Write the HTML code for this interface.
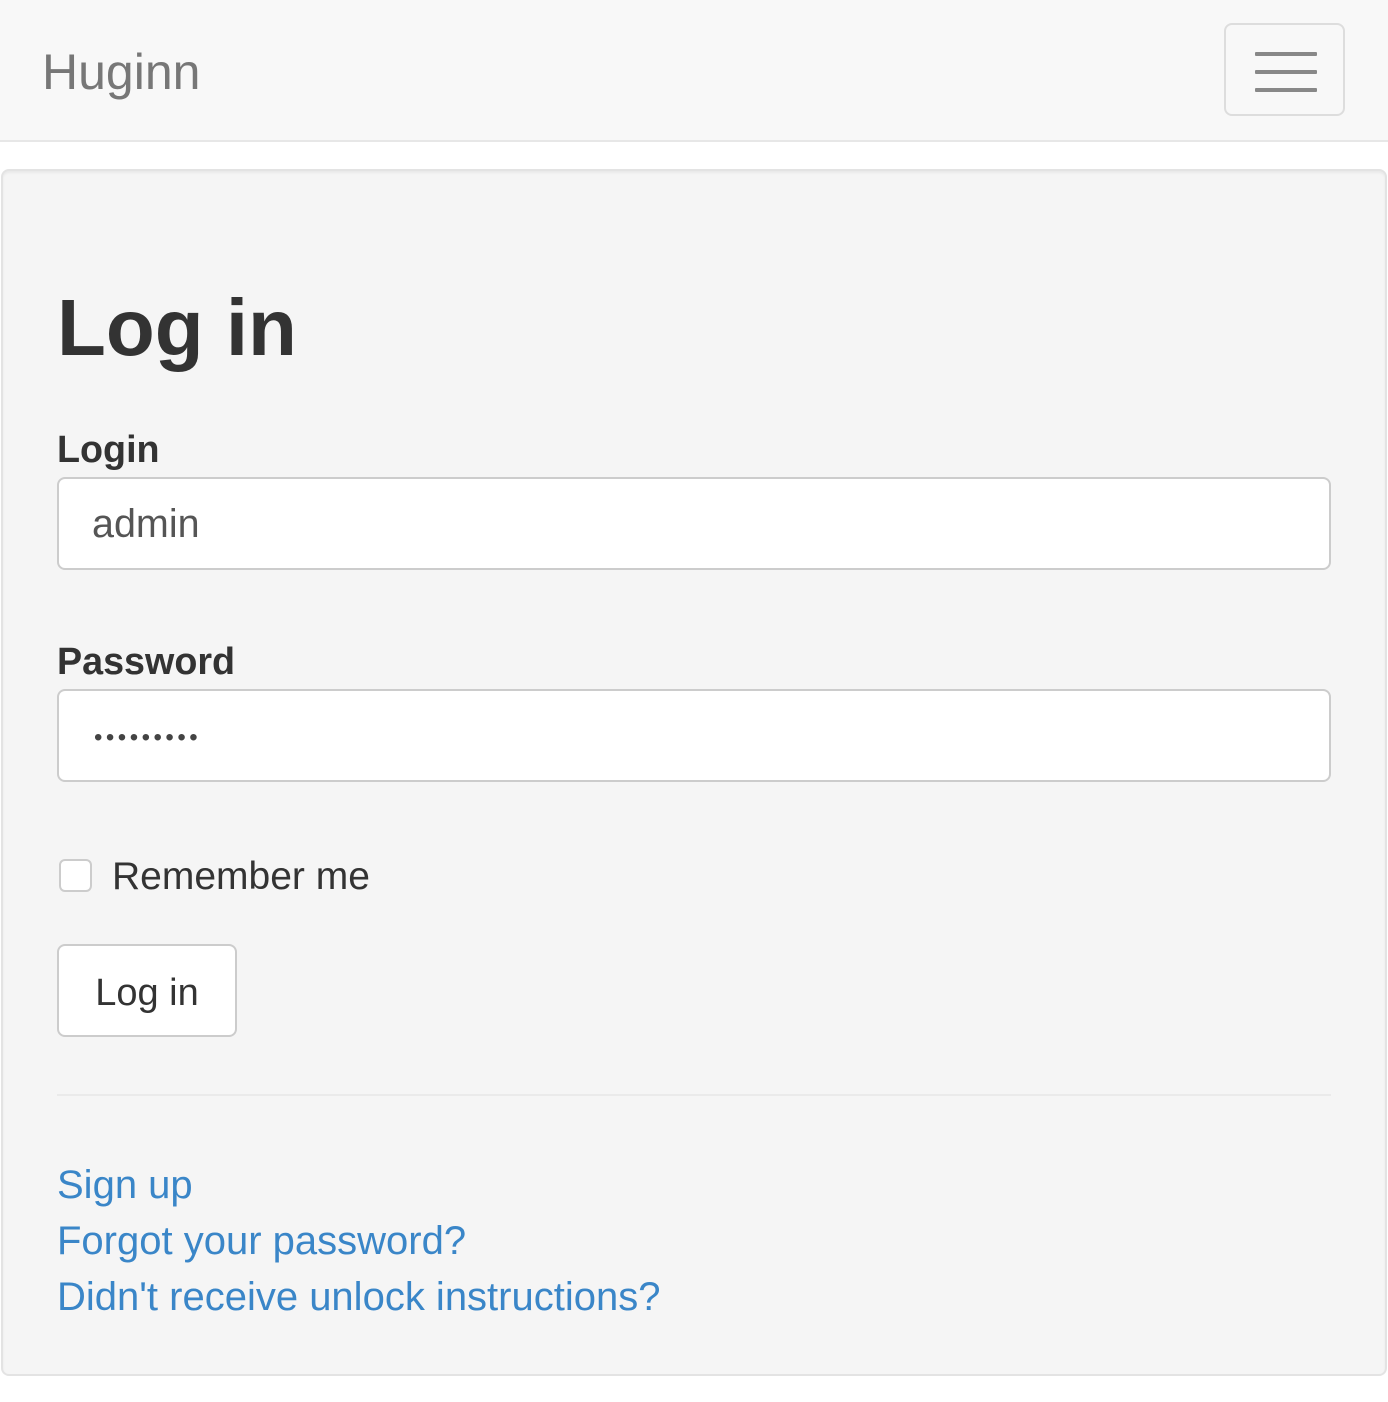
<!DOCTYPE html>
<html><head><meta charset="utf-8"><style>
*{box-sizing:border-box;margin:0;padding:0}
body{width:1388px;height:1402px;background:#fff;font-family:"Liberation Sans",Arial,sans-serif;color:#333;position:relative;overflow:hidden}
.nav{position:absolute;left:0;top:0;width:1388px;height:142px;background:#f8f8f8;border-bottom:2px solid #e7e7e7}
.brand{position:absolute;left:42px;top:44px;font-size:50px;line-height:56px;color:#777}
.tog{position:absolute;left:1224px;top:23px;width:121px;height:93px;border:2px solid #ddd;border-radius:8px}
.tog i{position:absolute;left:29px;width:62px;height:4px;background:#888;border-radius:1px}
.well{position:absolute;left:1px;top:169px;width:1386px;height:1207px;background:#f5f5f5;border:2px solid #e3e3e3;border-radius:8px;box-shadow:inset 0 2px 2px rgba(0,0,0,.05)}
.a{position:absolute;white-space:nowrap}
h1{position:absolute;left:57px;top:282px;font-size:80px;line-height:92px;font-weight:bold;color:#333}
.lbl{font-weight:bold;font-size:37.7px;line-height:40px;color:#333}
.inp{position:absolute;left:57px;width:1274px;height:93px;background:#fff;border:2px solid #ccc;border-radius:8px;font-size:39.5px;line-height:91px;padding-left:33px;color:#555}
.cb{position:absolute;left:59px;top:859px;width:33px;height:33px;border:2px solid #ccc;border-radius:6px;background:#fff}
.btn{position:absolute;left:57px;top:944px;width:180px;height:93px;background:#fff;border:2px solid #ccc;border-radius:8px;font-size:38px;line-height:95px;text-align:center;color:#333}
.hr{position:absolute;left:57px;top:1094px;width:1274px;height:2px;background:#eaeaea}
.lk{color:#3a86c8;font-size:40px;line-height:40px;left:57px}
</style></head><body>
<div class="nav"><div class="brand">Huginn</div><div class="tog"><i style="top:27px"></i><i style="top:45px"></i><i style="top:63px"></i></div></div>
<div class="well"></div>
<h1>Log in</h1>
<div class="a lbl" style="left:57px;top:429px">Login</div>
<div class="inp" style="top:477px">admin</div>
<div class="a lbl" style="left:57px;top:641px">Password</div>
<div class="inp" style="top:689px;font-size:24px;letter-spacing:3.5px;line-height:94px;padding-left:35px;color:#444">•••••••••</div>
<div class="cb"></div>
<div class="a" style="left:112px;top:856px;font-size:39px;line-height:42px;color:#333">Remember me</div>
<div class="btn">Log in</div>
<div class="hr"></div>
<div class="a lk" style="top:1165px">Sign up</div>
<div class="a lk" style="top:1221px">Forgot your password?</div>
<div class="a lk" style="top:1277px">Didn't receive unlock instructions?</div>
</body></html>
